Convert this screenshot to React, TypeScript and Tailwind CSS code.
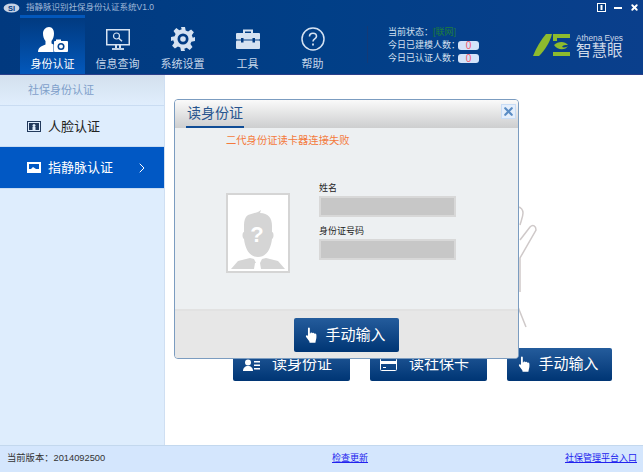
import { ChevronRight, X } from 'lucide-react';

const cjk = "font-['Liberation_Sans','Noto_Sans_CJK_SC',sans-serif]";

function HandIcon({ className }: { className?: string }) {
  return (
    <svg viewBox="0 0 14 18" className={className} fill="white">
      <path d="M3.200 1.200c0-1.200 2-1.200 2 0v5.600l.8-.2V6c.9-.6 1.700-.4 2 .5.8-.6 1.700-.4 2 .5.9-.5 2-.2 2.200.9.3 2 .1 4.600-.5 6.100l-.5 2.800H5l-.4-1.500L1.200 10.500c-.7-1 .3-2.200 1.400-1.500l.6.600z" />
    </svg>
  );
}

function TopTab({ label, active, children }: { label: string; active?: boolean; children: React.ReactNode }) {
  return (
    <div
      className={`w-[65px] h-[59px] flex flex-col items-center ${
        active ? 'bg-gradient-to-b from-[#013a80] to-[#0358bb] border-t-[3px] border-[#0357bb] pt-[8px]' : 'pt-[11px]'
      }`}
    >
      <div className="h-[26px] flex items-center justify-center">{children}</div>
      <span className={`mt-[4px] text-[11px] leading-[16px] ${active ? 'text-white' : 'text-[#c5d6ea]'}`}>{label}</span>
    </div>
  );
}

function BlueButton({
  label,
  className,
  gap,
  children,
}: {
  label: string;
  className: string;
  gap: string;
  children: React.ReactNode;
}) {
  return (
    <div className={`${className} ${gap} rounded-[2px] bg-gradient-to-b from-[#245c9c] to-[#003574] flex items-center justify-center text-white text-[15px]`}>
      {children}
      <span>{label}</span>
    </div>
  );
}

function Stat({ label, value }: { label: string; value: string }) {
  return (
    <div className="h-[13px] flex items-center text-[9px] leading-[13px] text-[#d5e1f0] whitespace-nowrap">
      <span className="w-[70px]">{label}</span>
      <span className="w-[21px] h-[9px] rounded-[3px] bg-[#d3e3fa] text-[#f0586a] flex items-center justify-center text-[10px]">{value}</span>
    </div>
  );
}

export default function App() {
  return (
    <div className={`w-[643px] h-[472px] flex flex-col overflow-hidden bg-white relative ${cjk}`}>
      {/* header */}
      <div className="h-[75px] border-b border-[#2a3f8a] bg-gradient-to-r from-[#01397f] via-[#013f87] to-[#0a3f8c] flex flex-col shrink-0">
        <div className="h-[16px] flex items-center pl-[3px] pr-[4px]">
          <svg viewBox="0 0 20 12" className="w-[17px] h-[10px]">
            <ellipse cx="10" cy="6" rx="9.500" ry="5.500" fill="#c6d3e6" />
            <text x="10" y="9.500" textAnchor="middle" fontSize="9" fontWeight="bold" fill="#01397f">SI</text>
          </svg>
          <span className="ml-[6px] text-[8.500px] text-[#a0b8d8] whitespace-nowrap">指静脉识别社保身份认证系统V1.0</span>
          <div className="ml-auto flex items-center gap-[8px]">
            <svg viewBox="0 0 9 9" className="w-[9px] h-[9px]">
              <rect width="9" height="9" fill="white" />
              <rect x="1" y="1" width="7" height="7" fill="#01397f" />
              <rect x="3.500" y="2" width="2" height="5" fill="white" />
            </svg>
            <div className="w-[8px] h-[2px] bg-white" />
            <X className="w-[9px] h-[9px] text-white" strokeWidth={5} />
          </div>
        </div>
        <div className="flex flex-1 pl-[20px]">
          <TopTab label="身份认证" active>
            <svg viewBox="0 0 30 25" className="w-[30px] h-[25px]" fill="white">
              <path d="M11 0c3.500 0 5 3 5 6.500 0 3-1 6-2.500 7.500v2.500l2 1V25H0c0-3 1.500-5 4-6l3.500-1.500V14C6 12.500 5 9.500 5 6.500 5 3 7.500 0 11 0z" />
              <rect x="16" y="14" width="14" height="11" rx="1" />
              <rect x="18" y="12.500" width="5" height="2" />
              <circle cx="23" cy="19.500" r="3.500" fill="#01418f" />
              <circle cx="23" cy="19.500" r="2" fill="white" />
            </svg>
          </TopTab>
          <TopTab label="信息查询">
            <svg viewBox="0 0 24 21" className="w-[24px] h-[21px]" fill="none" stroke="#d5e2f2">
              <rect x="0.750" y="0.750" width="22.500" height="15" strokeWidth="1.500" />
              <circle cx="10.500" cy="7" r="3" strokeWidth="1.200" />
              <path d="M12.700 9.200l3.300 3" strokeWidth="1.500" />
              <path d="M10 16v3M14 16v3" strokeWidth="2" />
              <path d="M6 20h12" strokeWidth="1.800" />
            </svg>
          </TopTab>
          <TopTab label="系统设置">
            <svg viewBox="0 0 24 24" className="w-[24px] h-[24px]" fill="#d5e2f2">
              <path d="M10 0h4l.7 3.600 2.400 1 3-2.100 2.800 2.800-2.100 3 1 2.400L24 10v4l-3.600.7-1 2.400 2.100 3-2.800 2.800-3-2.100-2.400 1L14 24h-4l-.7-3.600-2.400-1-3 2.100-2.800-2.800 2.100-3-1-2.400L0 14v-4l3.600-.7 1-2.400-2.100-3 2.800-2.800 3 2.100 2.400-1z" />
              <circle cx="12" cy="12" r="5.500" fill="#013b83" />
              <circle cx="12" cy="12" r="2.800" />
            </svg>
          </TopTab>
          <TopTab label="工具">
            <svg viewBox="0 0 24 20" className="w-[24px] h-[20px]">
              <path d="M8 4V1.500h8V4" fill="none" stroke="#d5e2f2" strokeWidth="2" />
              <rect y="4" width="24" height="6.500" rx="1" fill="#d5e2f2" />
              <rect y="11.500" width="24" height="8.500" rx="1" fill="#d5e2f2" />
              <rect x="5" y="9" width="2.500" height="4.500" fill="#013b83" />
              <rect x="16.500" y="9" width="2.500" height="4.500" fill="#013b83" />
            </svg>
          </TopTab>
          <TopTab label="帮助">
            <svg viewBox="0 0 24 24" className="w-[24px] h-[24px]" fill="none" stroke="#d5e2f2">
              <circle cx="12" cy="12" r="11" strokeWidth="1.500" />
              <path d="M8.500 9.500c0-2 1.500-3.300 3.500-3.300s3.500 1.300 3.500 3c0 2.800-3.500 2.600-3.500 5.300" strokeWidth="1.600" />
              <path d="M12 16.500v2" strokeWidth="1.800" />
            </svg>
          </TopTab>
          <div className="w-px h-[37px] mt-[11px] ml-[22px] bg-[#123a78]" />
          <div className="ml-[20px] mt-[11px] flex flex-col">
            <div className="h-[13px] flex items-center text-[9px] leading-[13px] text-[#d5e1f0] whitespace-nowrap">
              <span>当前状态：</span>
              <span className="text-[#1e7d3c]">[联网]</span>
            </div>
            <Stat label="今日已建模人数：" value="0" />
            <Stat label="今日已认证人数：" value="0" />
          </div>
          <div className="ml-auto mr-[20px] mt-[19px] flex items-start">
            <svg viewBox="0 0 37 22" className="w-[37px] h-[22px]" fill="#8dbb2e">
              <path d="M0 22C3 14 8 6 13 0h6c-2 8-7 16-13 22z" />
              <path d="M20 0h17v4H24v3h-4zM20 18h17v4H20z" />
              <path d="M21 11c4-4 11-4 14 0-3 0-5 0-6 2 2 1 5 0 6-1-2 4-10 5-14-1z" />
            </svg>
            <div className="ml-[6px] flex flex-col text-[#ced9e8]">
              <span className="text-[8.300px] leading-[8px] whitespace-nowrap">Athena Eyes</span>
              <span className="mt-[1px] text-[15.500px] leading-[16px] whitespace-nowrap">智慧眼</span>
            </div>
          </div>
        </div>
      </div>

      {/* body */}
      <div className="flex flex-1 min-h-0">
        <div className="w-[165px] shrink-0 bg-[#deedfd] border-r border-[#cfdff2] flex flex-col">
          <div className="h-[31px] bg-gradient-to-b from-[#d3e0ee] to-[#e0eefd] border-b border-[#c9dcf2] flex items-center pl-[28px] text-[11px] text-[#7f9fca]">
            社保身份认证
          </div>
          <div className="h-[41px] border-b border-[#c9dcf2] flex items-center pl-[27px] pt-[1px] text-[#222] text-[13px]">
            <svg viewBox="0 0 14 11" className="w-[14px] h-[11px] mr-[7px]">
              <rect x="0.500" y="0.500" width="13" height="10" fill="none" stroke="#223a5c" />
              <rect x="2" y="2" width="10" height="7" fill="#223a5c" />
              <circle cx="7" cy="4.500" r="1.500" fill="#deedfd" />
              <rect x="5.500" y="6" width="3" height="3" fill="#deedfd" />
            </svg>
            人脸认证
          </div>
          <div className="h-[41px] bg-[#0158c4] flex items-center pl-[27px] pr-[14px] text-white text-[13px]">
            <svg viewBox="0 0 14 11" className="w-[14px] h-[11px] mr-[7px]">
              <rect width="14" height="11" fill="white" />
              <rect x="2" y="2" width="10" height="5" fill="#0158c4" />
              <path d="M2 9l4-4 3 2 3 2z" fill="white" />
            </svg>
            指静脉认证
            <ChevronRight className="ml-auto w-[16px] h-[16px]" strokeWidth={1.500} />
          </div>
          <div className="h-px bg-[#c9dcf2]" />
        </div>

        <div className="flex-1 flex flex-col">
          <div className="flex gap-[20px] pl-[68px] mt-[273px]">
            <BlueButton label="读身份证" className="w-[117px] h-[33px] pr-[8px]" gap="gap-[12px]">
              <svg viewBox="0 0 17 12" className="w-[17px] h-[12px]" fill="white">
                <circle cx="5" cy="3.500" r="3" />
                <path d="M0 12c0-3 2-5 5-5s5 2 5 5z" />
                <rect x="11" y="2" width="6" height="1.500" />
                <rect x="11" y="5.500" width="6" height="1.500" />
                <rect x="11" y="9" width="6" height="1.500" />
              </svg>
            </BlueButton>
            <BlueButton label="读社保卡" className="w-[117px] h-[33px] pr-[8px]" gap="gap-[12px]">
              <svg viewBox="0 0 17 13" className="w-[17px] h-[13px]" fill="none" stroke="white">
                <rect x="0.500" y="0.500" width="16" height="12" rx="1" />
                <rect x="0.500" y="3.500" width="16" height="2" fill="white" />
                <path d="M3 9.500h3" />
              </svg>
            </BlueButton>
            <BlueButton label="手动输入" className="w-[105px] h-[33px] pr-[2px]" gap="gap-[7px]">
              <HandIcon className="w-[13px] h-[17px]" />
            </BlueButton>
          </div>
        </div>
      </div>

      {/* footer */}
      <div className="h-[27px] shrink-0 bg-[#d4e6fd] border-t border-[#c3d8ee] flex items-center text-[9px] pl-[7px] pr-[6px]">
        <span className="w-[325px] text-[9.300px] text-[#333]">当前版本：2014092500</span>
        <a className="text-[#2222ee] underline">检查更新</a>
        <a className="ml-auto text-[#2222ee] underline">社保管理平台入口</a>
      </div>

      {/* hand outline behind the dialog */}
      <svg viewBox="0 0 24 130" className="absolute left-[516px] top-[200px] w-[24px] h-[130px]" fill="none" stroke="#cfc9c9" strokeWidth="1.500">
        <path d="M2 7c3 0 5 3 5 6 0 4-2 8-3 12" />
        <path d="M4 40L14 27c3-3 6-1 6 3L4 58v34" />
        <path d="M2 107l8 20" />
      </svg>

      {/* dialog */}
      <div className="absolute left-[174px] top-[99px] w-[345px] h-[260px] rounded-[4px] border border-[#7b9cc0] bg-[#edf0f2] flex flex-col overflow-hidden">
        <div className="h-[28px] shrink-0 bg-gradient-to-b from-[#fafafa] to-[#cdcecf] flex justify-between">
          <div className="ml-[11px] w-[58px] h-[28px] border-b-2 border-[#104d96] text-center text-[#27548e] text-[14px] leading-[26px]">
            读身份证
          </div>
          <div className="w-[15px] h-[15px] mt-[4px] mr-[2px] border border-[#c8dcf5] bg-[#e4eefb] flex items-center justify-center">
            <X className="w-[13px] h-[13px] text-[#5a8cc4]" strokeWidth={4} />
          </div>
        </div>
        <div className="flex-1 pl-[51px]">
          <div className="text-[10.300px] leading-[14px] text-[#f47a3c] mt-[6px]">二代身份证读卡器连接失败</div>
          <div className="flex mt-[34px]">
            <div className="w-[64px] h-[80px] mt-[11px] border-2 border-[#d5d5d5] bg-white flex items-end justify-center overflow-hidden">
              <svg viewBox="0 0 60 76" className="w-[60px] h-[76px]">
                <path d="M20 20l10-3 3-2-1 3c8 0 12 5 12 13v6c2 0 2 6 0 7-1 9-5 18-14 18s-13-9-14-18c-2-1-2-7 0-7v-7c0-4 1-8 4-10z" fill="#d5d5d5" />
                <path d="M3 74l7-8 12-3 4 1 2 4h4l2-4 4-1 12 3 7 8H33l-1-6h-5l-1 6z" fill="#d5d5d5" />
                <text x="29" y="47" textAnchor="middle" fontSize="22" fontWeight="bold" fill="white">?</text>
              </svg>
            </div>
            <div className="ml-[29px] flex flex-col">
              <span className="text-[9px] leading-[13px] text-[#222]">姓名</span>
              <div className="mt-[1px] w-[137px] h-[21px] border-2 border-[#d8d8d8] bg-[#c7c7c7]" />
              <span className="mt-[8px] text-[9px] leading-[13px] text-[#222]">身份证号码</span>
              <div className="mt-[1px] w-[137px] h-[21px] border-2 border-[#d8d8d8] bg-[#c7c7c7]" />
            </div>
          </div>
        </div>
        <div className="h-[49px] shrink-0 bg-[#e7e7e7] border-t-2 border-[#e2e2e2] flex justify-center items-start pt-[7px]">
          <BlueButton label="手动输入" className="w-[105px] h-[34px] pr-[2px]" gap="gap-[7px]">
            <HandIcon className="w-[13px] h-[17px]" />
          </BlueButton>
        </div>
      </div>
    </div>
  );
}
